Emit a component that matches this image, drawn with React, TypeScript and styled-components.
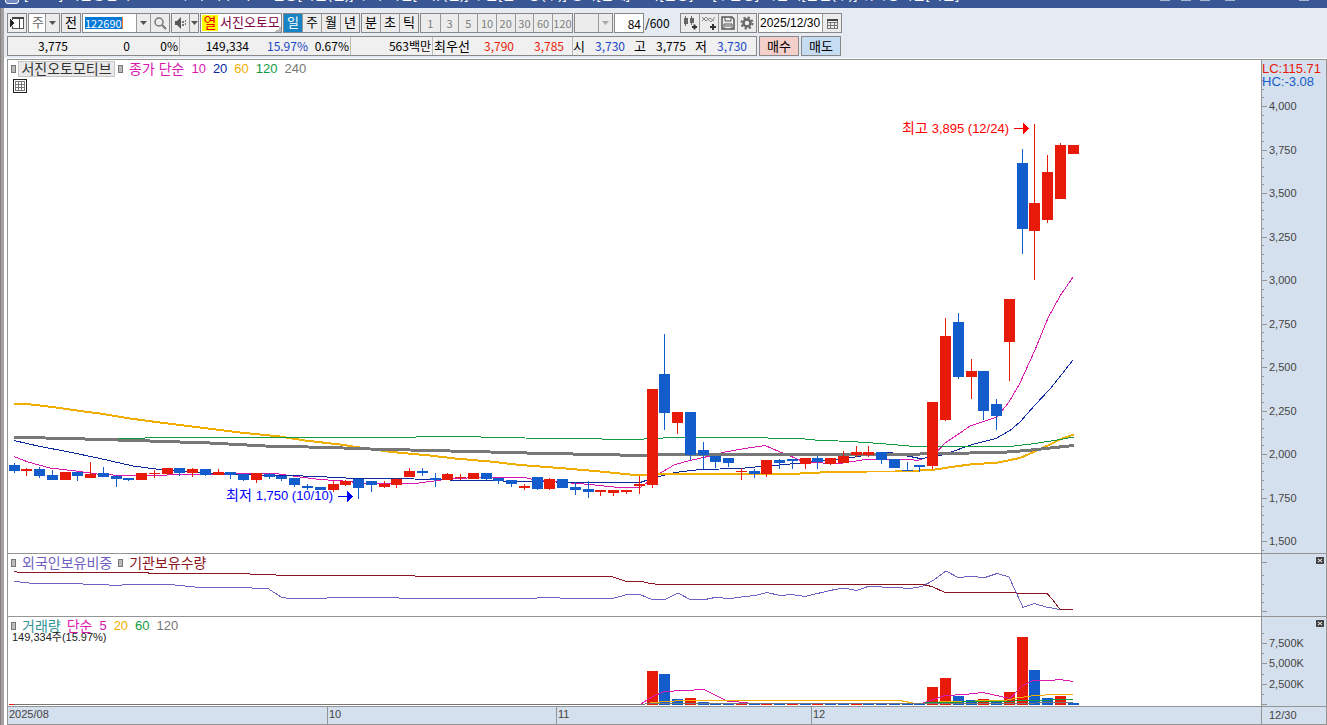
import React from 'react';
import styled, { createGlobalStyle } from 'styled-components';

const RED = '#e81a0a';
const BLUE = '#125ccb';
const NAVY = '#0b2a9e';
const MAGENTA = '#d918ae';
const GOLD = '#f0ae00';
const GREEN = '#119a3f';
const GRAY = '#777777';
const LINE = '#949494';
const AXIS_BG = '#d5e0ee';

const SANS = '"Liberation Sans", "Noto Sans CJK KR", sans-serif';
const NUMERIC = '"Noto Sans CJK KR", sans-serif';

const GlobalStyle = createGlobalStyle`
  * { box-sizing: border-box; }
  body { margin: 0; background: #e5eaf3; font-family: ${SANS}; font-size: 13px; color: #000; overflow: hidden; }
  button, input, select { font-family: inherit; font-size: inherit; margin: 0; padding: 0; border-radius: 0; }
  svg { display: block; }
`;

const Page = styled.div`
  display: flex;
  flex-direction: column;
  min-height: 100vh;
`;

const TitleBar = styled.header`
  display: flex;
  align-items: flex-end;
  height: 8px;
  padding: 0 18px 4px 5px;
  gap: 5px;
  overflow: hidden;
  background: #3a5795;
  color: #fff;
  white-space: pre;
`;

const AppIcon = styled.span`
  flex: none;
  width: 14px;
  height: 14px;
  border: 1px solid #fff;
  border-radius: 3px;
  background: #6f8cc4;
`;

const TitleText = styled.h1`
  flex: 1;
  margin: 0 0 2px;
  font-size: 14px;
  font-weight: 400;
  line-height: 16px;
`;

const WindowMark = styled.span<{ $gap: number }>`
  width: 10px;
  height: 5px;
  margin: 0 0 3px ${p => p.$gap}px;
  border-bottom: 1px solid #a9b6d2;
`;

const Body = styled.div`
  display: flex;
  flex: 1;
`;

const FrameEdge = styled.div`
  width: 4px;
  background: #a4a0a0;
  border-left: 1px solid #858181;
`;

const Main = styled.main`
  flex: 1;
  min-width: 0;
  display: flex;
  flex-direction: column;
`;

const Bars = styled.div`
  padding: 5px 0 2px 3px;
`;

const Toolbar = styled.div`
  display: flex;
  gap: 1px;
  height: 20px;
`;

const Group = styled.div<{ $w: number; $bg?: string }>`
  display: flex;
  flex: none;
  width: ${p => p.$w}px;
  height: 20px;
  border: 1px solid #888;
  background: ${p => p.$bg || '#ececec'};
  overflow: hidden;
`;

const MinuteGroup = styled(Group)`
  display: grid;
  grid-template-columns: repeat(7, 1fr) 20px;
`;

const Tool = styled.button<{ $active?: boolean }>`
  flex: 1;
  min-width: 0;
  display: flex;
  align-items: center;
  justify-content: center;
  border: 0;
  border-left: 1px solid #999;
  background: ${p => (p.$active ? '#1583c4' : '#ececec')};
  color: ${p => (p.$active ? '#fff' : '#000')};
  font-size: 13px;
  line-height: 18px;
  &:first-child { border-left: 0; }
`;

const MinuteTool = styled(Tool)`
  color: #808080;
  font-family: ${NUMERIC};
  font-size: 11px;
`;

const ArrowTool = styled(Tool)<{ $w: number }>`
  flex: none;
  width: ${p => p.$w}px;
`;

const Pick = styled.select`
  flex: 1;
  min-width: 0;
  appearance: none;
  border: 0;
  padding-left: 3px;
  background: transparent;
  color: #666;
  font-size: 13px;
  line-height: 18px;
`;

const CodeInput = styled.input`
  width: 53px;
  border: 0;
  padding-left: 2px;
  background: linear-gradient(90deg, #fff 2px, #0078d7 2px, #0078d7 39px, #f08030 39px, #f08030 40px, #fff 40px) 0 3px / 100% 12px no-repeat #fff;
  color: #fff;
  font-family: ${NUMERIC};
  font-size: 11px;
`;

const Rank = styled.button`
  margin: 1px 0 1px 1px;
  width: 16px;
  border: 0;
  background: #ff0;
  color: #e00;
  font-size: 14px;
  line-height: 16px;
`;

const StockName = styled.button`
  flex: 1;
  min-width: 0;
  overflow: hidden;
  border: 0;
  padding-left: 2px;
  background: linear-gradient(135deg, transparent 50%, #bbb 50%) right bottom / 7px 5px no-repeat #fff;
  color: #7a0040;
  font-size: 13px;
  line-height: 16px;
  text-align: left;
  white-space: nowrap;
`;

const CountInput = styled.input`
  flex: 1;
  min-width: 0;
  border: 0;
  padding: 0 2px;
  background: #fff;
  font-family: ${NUMERIC};
  font-size: 12px;
  text-align: right;
`;

const DateInput = styled.input`
  flex: 1;
  min-width: 0;
  border: 0;
  padding: 0 0 0 1px;
  background: #fff;
  font-size: 12px;
`;

const Total = styled.span`
  width: 34px;
  font-family: ${NUMERIC};
  font-size: 12px;
  line-height: 20px;
`;

const QuoteRow = styled.div`
  display: flex;
  gap: 2px;
  margin-top: 3px;
  font-family: ${NUMERIC};
  font-size: 12px;
  line-height: 18px;
`;

const QuoteBox = styled.div`
  display: flex;
  width: 750px;
  height: 20px;
  border: 1px solid #888;
  background: #f0f0f0;
  white-space: nowrap;
`;

const QuoteCell = styled.div<{ $w: number }>`
  display: flex;
  flex: none;
  width: ${p => p.$w}px;
  padding-right: 1px;
  border-right: 1px solid #bbb;
  &:last-child { border-right: 0; }
`;

const Value = styled.span<{ $w: number; $c?: string }>`
  flex: none;
  width: ${p => p.$w}px;
  color: ${p => p.$c || '#000'};
  text-align: right;
`;

const Caption = styled(Value)`
  font-size: 13px;
`;

const OrderButton = styled.button<{ $bg: string }>`
  width: 40px;
  height: 20px;
  border: 1px solid #888;
  background: ${p => p.$bg};
  font-size: 13px;
  line-height: 16px;
`;

const Chart = styled.section`
  padding-left: 3px;
  border-top: 1px solid #fff;
  background: #fff;
`;

const ChartFrame = styled.div`
  border: 1px solid ${LINE};
  border-bottom: 0;
`;

const Panel = styled.div<{ $h: number; $bg?: string }>`
  display: flex;
  height: ${p => p.$h}px;
  border-bottom: 1px solid ${LINE};
  background: ${p => p.$bg || '#fff'};
`;

const Plot = styled.div`
  position: relative;
  flex: 1;
  min-width: 0;
  overflow: hidden;
`;

const Axis = styled.div`
  position: relative;
  flex: none;
  width: 65px;
  border-left: 1px solid ${LINE};
  background: ${AXIS_BG};
`;

const Canvas = styled.svg`
  width: 100%;
  height: 100%;
  overflow: hidden;
`;

const Legend = styled.div`
  position: absolute;
  left: 3px;
  top: 1px;
  display: flex;
  align-items: center;
  height: 16px;
  white-space: nowrap;
`;

const Marker = styled.span`
  width: 5px;
  height: 8px;
  border: 1px solid #777;
  background: #bbb;
`;

const NameTag = styled.button`
  height: 16px;
  width: 97px;
  margin: 0 3px 0 2px;
  border: 1px solid #c4c4c4;
  background: #e9e9e9;
  color: #333;
  font-size: 14px;
  line-height: 14px;
`;

const Label = styled.span<{ $c: string }>`
  margin-left: 6px;
  color: ${p => p.$c};
  font-size: 14px;
  line-height: 16px;
`;

const Period = styled(Label)`
  margin-left: 7px;
  font-size: 13px;
`;

const GridButton = styled.button`
  position: absolute;
  left: 5px;
  top: 19px;
  width: 14px;
  height: 14px;
  border: 1px solid #222;
  background: #fff;
`;

const VolumeNote = styled.div`
  position: absolute;
  left: 4px;
  top: 14px;
  font-size: 11px;
  line-height: 13px;
  color: #222;
`;

const CloseButton = styled.button`
  position: absolute;
  right: 2px;
  top: 3px;
  width: 8px;
  height: 7px;
  border: 0;
  background: #444;
`;

const MonthCell = styled.div<{ $w?: number }>`
  flex: ${p => (p.$w ? 'none' : '1')};
  width: ${p => (p.$w ? p.$w + 'px' : 'auto')};
  padding-left: 1px;
  border-left: 1px solid ${LINE};
  font-size: 11px;
  line-height: 15px;
  color: #444;
  &:first-child { border-left: 0; }
`;

const LastDate = styled.div`
  flex: none;
  width: 65px;
  padding-left: 7px;
  border-left: 1px solid ${LINE};
  font-size: 11px;
  line-height: 17px;
  color: #444;
`;

/* One candle per trading day: colour, body top, body bottom, high, low. */
type Candle = [string, number, number, number, number];
const candles: Candle[] = [
  ['b', 465, 471, 463, 473], ['r', 469, 471, 468, 476], ['b', 469, 476, 467, 478], ['b', 475, 480, 470, 480],
  ['r', 472, 480, 472, 480], ['b', 472, 476, 472, 481], ['r', 474, 478, 462, 478], ['b', 473, 477, 467, 477],
  ['b', 476, 479, 475, 487], ['b', 478, 480, 478, 481], ['r', 473, 480, 473, 480], ['r', 473, 474, 470, 478],
  ['r', 468, 474, 468, 475], ['b', 468, 473, 468, 476], ['r', 469, 473, 468, 477], ['b', 469, 475, 469, 476],
  ['r', 472, 475, 469, 475], ['b', 472, 475, 472, 479], ['b', 474, 480, 474, 481], ['r', 473, 480, 473, 483],
  ['b', 474, 477, 473, 479], ['b', 476, 479, 476, 481], ['b', 478, 485, 478, 487], ['b', 486, 488, 484, 490],
  ['b', 487, 490, 487, 490], ['r', 484, 490, 481, 492], ['r', 481, 485, 480, 486], ['b', 479, 488, 479, 499],
  ['b', 481, 485, 481, 492], ['r', 484, 487, 481, 488], ['r', 479, 485, 478, 488], ['r', 471, 477, 468, 477],
  ['b', 471, 473, 468, 476], ['b', 478, 480, 473, 487], ['r', 474, 480, 473, 480], ['r', 477, 478, 474, 480],
  ['r', 473, 479, 473, 479], ['b', 473, 479, 473, 480], ['b', 478, 481, 478, 484], ['b', 480, 484, 480, 487],
  ['r', 486, 488, 484, 490], ['b', 477, 489, 477, 490], ['r', 479, 489, 478, 490], ['b', 479, 488, 479, 488],
  ['b', 487, 490, 482, 495], ['b', 489, 492, 481, 498], ['r', 490, 492, 490, 496], ['r', 490, 493, 490, 496],
  ['r', 490, 492, 490, 494], ['r', 484, 486, 476, 494], ['r', 389, 485, 389, 488], ['b', 374, 413, 334, 430],
  ['r', 412, 423, 412, 434], ['b', 412, 455, 412, 460], ['b', 450, 455, 442, 469], ['b', 456, 462, 456, 468],
  ['b', 458, 463, 458, 467], ['r', 471, 472, 468, 480], ['b', 471, 474, 469, 478], ['r', 460, 474, 460, 477],
  ['b', 460, 463, 459, 469], ['b', 459, 461, 459, 469], ['r', 458, 464, 458, 469], ['b', 458, 462, 456, 469],
  ['r', 458, 464, 458, 465], ['r', 456, 463, 451, 463], ['r', 452, 455, 446, 457], ['r', 452, 455, 446, 457],
  ['b', 452, 460, 452, 464], ['b', 459, 468, 459, 468], ['b', 470, 471, 462, 471], ['b', 465, 467, 465, 472],
  ['r', 402, 466, 402, 469], ['r', 336, 420, 318, 421], ['b', 322, 377, 313, 379], ['r', 371, 377, 359, 399],
  ['b', 371, 411, 371, 420], ['b', 404, 416, 399, 430], ['r', 299, 342, 299, 381], ['b', 163, 229, 149, 254],
  ['r', 203, 231, 124, 280], ['r', 172, 220, 155, 223], ['r', 145, 199, 143, 199], ['r', 145, 154, 145, 154],
];

/* Tops of the volume bars that rise above the base line. */
const volumeTops: Record<number, number> = {
  50: 671, 51: 674, 52: 699, 53: 698, 54: 702, 72: 687, 73: 678, 74: 696, 75: 700,
  76: 699, 77: 702, 78: 692, 79: 637, 80: 670, 81: 698, 82: 696, 83: 703,
};
/* Days on which the volume rose over the day before. */
const volumeUp = [0, 50, 53, 57, 59, 61, 63, 66, 72, 73, 76, 78, 79, 82];

const centre = (i: number) => 14 + Math.floor(i * 12.76);
const fill = (c: string) => (c === 'r' ? RED : BLUE);

function Trend({ points, color, width = 1 }: { points: string; color: string; width?: number }) {
  return <polyline points={points} fill="none" stroke={color} strokeWidth={width} shapeRendering="crispEdges" />;
}

const ma60 = '14,404 27,404 40,405.500 60,408 80,411 100,413.500 130,418.500 160,422.500 200,427.500 240,432.500 280,436.500 305,440.500 340,444.500 360,447.500 392,452 430,455.500 455,458.500 490,461.500 520,465 560,468 600,471.500 630,474.500 655,474.500 680,473.500 800,473.500 820,472.500 868,471.500 895,471.500 920,470.500 935,469.500 955,466.500 970,464.500 998,462.500 1020,458 1036,451 1050,444.500 1062,438.500 1074,434.500';
const ma240 = '14,437.500 45,438 85,439 150,441 210,443 265,446 330,447.500 370,449 430,450.500 490,452 545,453.500 600,454.500 640,455.500 660,454.500 900,454.500 940,453.500 1000,452.500 1027,450.500 1050,448 1074,445.500';
const ma120 = '14,438.500 120,438.500 170,437.500 415,437.500 417,436.500 480,436.500 482,437.500 568,438.500 635,439.500 672,437.500 735,437.500 800,438.500 815,440 850,441.500 880,443.500 915,446.500 1010,446.500 1035,443.500 1060,439.500 1074,437';
const ma20 = '14,440.500 40,446.500 67,451.500 100,458.500 133,466 160,469.500 187,471.500 213,473.500 240,474.500 267,475.500 293,475.500 313,476.500 340,477.500 352,478.500 414,479 450,480 480,480 515,481.500 595,482.500 640,482.500 655,477.500 675,472.500 700,469.500 740,468.500 760,466.500 785,464.500 815,461.500 840,459.500 855,457 870,454.500 890,452.500 905,455.500 920,458.500 935,457 950,452.500 972,444.500 996,438.500 1010,430.500 1020,422 1035,405 1050,389 1062,374 1073,360';
const ma10 = '14,456.500 28,462 50,468 80,471.500 100,474.500 125,475.500 155,475.500 180,474.500 215,474.500 240,473.500 275,473.500 300,477 320,479.500 335,480.500 350,481.500 360,483.500 415,483.500 430,481.500 445,479.500 475,477.500 525,477.500 535,480 565,482.500 590,484.500 608,486.500 620,487.500 640,487.500 648,482 662,472 675,464.500 690,460.500 710,456 725,452 745,448.500 765,445.500 780,452 795,458 805,462.500 840,463.500 865,459.500 910,459.500 918,460.500 925,458 935,454 945,443 960,433 970,426 985,421 997,417 1009,402 1020,383 1035,350 1048,318 1060,296 1073,277';
const foreignShare = '14,581.500 20,582 33,583.500 70,583.500 96,584.500 121,585.500 123,584.500 170,584.500 200,587.500 235,587.500 268,588.500 281,597 288,598.500 326,598.500 328,597.500 398,597.500 400,598.500 530,598.500 545,597.500 575,598.500 612,598.500 620,596.500 627,594.500 640,594.500 652,599.500 665,599.500 678,593 690,599.500 705,599.500 715,597.500 730,598.500 745,596.500 755,595.500 767,592.500 780,595.500 792,594.500 805,596.500 830,590.500 843,588 857,590.500 868,586.500 895,587.500 910,588.500 922,586.500 934,580 946,571 958,577.500 970,576.500 985,577.500 997,573.500 1009,577 1016,592 1023,607.500 1034,603.500 1046,607 1060,609.500';
const institutionHoldings = '14,571.500 20,572.500 148,572.500 149,573.500 249,573.500 251,574.500 275,574.500 277,575.500 414,575.500 416,576.500 612,576.500 620,579.500 627,581.500 642,581.500 650,583.500 660,584.500 922,584.500 932,586.500 945,592.500 1015,592.500 1017,593.500 1047,593.500 1053,600 1060,609.500 1073,609.500';
const vol5 = '640,704.500 652,697 664,691.500 685,690.500 704,689.500 727,701 745,702.500 750,703.500 922,703.500 935,699 945,695.500 965,694.500 983,692.500 1010,698.500 1022,686 1033,680.500 1050,680.500 1060,679.500 1073,681.500';
const vol20 = '645,703.500 665,701.500 685,700.500 900,700.500 915,703.500 922,703.500 945,701.500 1005,700.500 1020,697.500 1035,695.500 1055,694.500 1073,694.500';

function ArrowMark({ x, y, color }: { x: number; y: number; color: string }) {
  return (
    <g fill={color} shapeRendering="crispEdges">
      <rect x={x} y={y} width={10} height={1} />
      <path d={`M${x + 9} ${y - 5}l6 5v1l-6 5z`} />
    </g>
  );
}

function PriceCanvas() {
  return (
    <Canvas role="img" aria-label="일봉 차트">
      <g transform="translate(-8 -60)">
        <Trend points={ma10} color={MAGENTA} />
        <Trend points={ma20} color={NAVY} />
        <Trend points={ma60} color={GOLD} width={2} />
        <Trend points={ma120} color={GREEN} />
        <Trend points={ma240} color={GRAY} width={3} />
        <g shapeRendering="crispEdges">
          {candles.map(([c, top, bottom, high, low], i) => (
            <g key={i} fill={fill(c)}>
              <rect x={centre(i) - 5} y={top} width={11} height={bottom - top} />
              <rect x={centre(i)} y={high} width={1} height={low - high} />
            </g>
          ))}
        </g>
        <text x={1009} y={133} fill="#f00" fontSize={13} textAnchor="end"><tspan fontSize={14}>최고 </tspan>3,895 (12/24)</text>
        <ArrowMark x={1014} y={128} color="#f00" />
        <text x={333} y={500} fill="#00f" fontSize={13} textAnchor="end"><tspan fontSize={14}>최저 </tspan>1,750 (10/10)</text>
        <ArrowMark x={338} y={496} color="#00f" />
      </g>
    </Canvas>
  );
}

function PriceAxis() {
  const y = (p: number) => Math.round(106 + (4000 - p) * 0.174);
  const minors = Array.from({ length: 55 }, (_, k) => 1450 + k * 50);
  const majors = Array.from({ length: 11 }, (_, k) => 1500 + k * 250);
  return (
    <Canvas>
      <g transform="translate(-1262 -60)">
        {minors.map(p => <rect key={p} x={1262} y={y(p)} width={2} height={1} fill={LINE} />)}
        {majors.map(p => (
          <g key={p}>
            <rect x={1262} y={y(p)} width={5} height={1} fill={LINE} />
            <text x={1269} y={y(p) + 4} fontSize={11} fill="#444">{p.toLocaleString('en-US')}</text>
          </g>
        ))}
        <text x={1262} y={73} fontSize={13} fill={RED}>LC:115.71</text>
        <text x={1262} y={86} fontSize={13} fill={BLUE}>HC:-3.08</text>
      </g>
    </Canvas>
  );
}

function VolumeCanvas() {
  return (
    <Canvas role="img" aria-label="거래량">
      <g transform="translate(-8 -617)" shapeRendering="crispEdges">
        {candles.map((_, i) => {
          const top = volumeTops[i] || 704;
          return <rect key={i} x={centre(i) - 5} y={top} width={11} height={705 - top} fill={volumeUp.includes(i) ? RED : BLUE} />;
        })}
        <Trend points={vol5} color={MAGENTA} />
        <Trend points={vol20} color={GOLD} />
        <Trend points="925,702.500 1000,701.500 1030,700.500 1073,699.500" color={GREEN} />
        <Trend points="14,704.500 640,704.500 650,703.500 1000,703.500 1073,702.500" color={GRAY} />
      </g>
    </Canvas>
  );
}

function TickMarks({ top, major, minor }: { top: number; major: number[]; minor: number[] }) {
  return (
    <g fill={LINE} transform={`translate(0 ${-top})`}>
      {major.map(y => <rect key={y} y={y} width={5} height={1} />)}
      {minor.map(y => <rect key={y} y={y} width={2} height={1} />)}
    </g>
  );
}

const Caret = ({ color = '#555' }: { color?: string }) => (
  <svg width="7" height="4" aria-hidden="true"><path d="M0 0h7L3.500 4z" fill={color} /></svg>
);

function Close({ label }: { label: string }) {
  return (
    <CloseButton aria-label={label}>
      <svg width="8" height="7"><path d="M2 2l4 3M6 2L2 5" stroke="#fff" /></svg>
    </CloseButton>
  );
}

export default function App() {
  return (
    <Page>
      <GlobalStyle />
      <TitleBar>
        <AppIcon />
        <TitleText>{'[0600] 키움종합차트         주가 지수 차트  신용[비율(일)] 주가 외인[보유(일)] 주문[잔고량(주)] 종목[현재] 호가[잔량]     [주문장] 시간외[단일(주)] 위탁증거금[비율]'}</TitleText>
        <WindowMark $gap={0} /><WindowMark $gap={6} /><WindowMark $gap={4} /><WindowMark $gap={10} /><WindowMark $gap={59} />
      </TitleBar>
      <Body>
        <FrameEdge />
        <Main>
          <Bars>
            <Toolbar>
              <Group $w={20}>
                <Tool aria-label="패널 열기">
                  <svg width="14" height="14" shapeRendering="crispEdges">
                    <path d="M2.500 4V1.500h11v11h-11V10" fill="#fff" stroke="#555" />
                    <path d="M2 1h12v2H2zM9 3h1v10H9z" fill="#444" /><path d="M0 3l5 4-5 4z" fill="#222" />
                  </svg>
                </Tool>
              </Group>
              <Group $w={32} $bg="#fff">
                <Pick aria-label="종목 구분"><option>주</option></Pick>
                <ArrowTool $w={14} aria-label="구분 목록"><Caret /></ArrowTool>
              </Group>
              <Group $w={20}><Tool>전</Tool></Group>
              <Group $w={88} $bg="#fff">
                <CodeInput aria-label="종목코드" defaultValue="122690" />
                <ArrowTool $w={14} aria-label="최근 종목"><Caret /></ArrowTool>
                <Tool aria-label="종목 검색">
                  <svg width="13" height="13"><circle cx="5" cy="5" r="4" fill="none" stroke="#777" strokeWidth="1.500" /><path d="M8 8l4 4" stroke="#777" strokeWidth="2" /></svg>
                </Tool>
              </Group>
              <Group $w={28}>
                <Tool aria-label="소리">
                  <svg width="14" height="12"><path d="M1 4h2l4-4v12L3 8H1z" fill="#555" /><path d="M8 4h2v2H8zM8 7h2v2H8zM11 3h1v2h-1zM11 6h1v2h-1z" fill="#777" /></svg>
                </Tool>
                <ArrowTool $w={9} aria-label="소리 설정"><Caret /></ArrowTool>
              </Group>
              <Group $w={82} $bg="#fff">
                <Rank>열</Rank>
                <StockName>서진오토모</StockName>
              </Group>
              <Group $w={77}><Tool $active>일</Tool><Tool>주</Tool><Tool>월</Tool><Tool>년</Tool></Group>
              <Group $w={58}><Tool>분</Tool><Tool>초</Tool><Tool>틱</Tool></Group>
              <MinuteGroup $w={153}>
                {['1', '3', '5', '10', '20', '30', '60', '120'].map(n => <MinuteTool key={n}>{n}</MinuteTool>)}
              </MinuteGroup>
              <Group $w={39}>
                <Pick aria-label="주기" disabled><option> </option></Pick>
                <ArrowTool $w={14} aria-label="주기 목록" disabled><Caret color="#aaa" /></ArrowTool>
              </Group>
              <Group $w={30} $bg="#fff"><CountInput aria-label="표시 봉 수" defaultValue="84" /></Group>
              <Total>/600</Total>
              <Group $w={77}>
                <Tool aria-label="봉 종류">
                  <svg width="16" height="16"><path d="M2 3h4v6H2zM8 3h4v5H8z" fill="#666" /><path d="M3.500 1v10M9.500 1v9" stroke="#666" /><path d="M10 12h5M12.500 9.500v5" stroke="#333" strokeWidth="2" /></svg>
                </Tool>
                <Tool aria-label="지표 추가">
                  <svg width="16" height="16"><path d="M1 6l4-4 5 5 4-5M1 2l4 4 4-3 4 3" fill="none" stroke="#888" /><path d="M9 12h6M12 9v6" stroke="#333" strokeWidth="2" /></svg>
                </Tool>
                <Tool aria-label="저장">
                  <svg width="14" height="14"><path d="M1 1h10l2 2v10H1z" fill="none" stroke="#555" strokeWidth="1.500" /><path d="M4 1v4h6V1M3 13V8h8v5M4 10h6" fill="none" stroke="#555" /></svg>
                </Tool>
                <Tool aria-label="설정">
                  <svg width="14" height="14"><circle cx="7" cy="7" r="3.500" fill="none" stroke="#666" strokeWidth="2.500" /><circle cx="7" cy="7" r="5.500" fill="none" stroke="#666" strokeWidth="2" strokeDasharray="2.200 2.120" /></svg>
                </Tool>
              </Group>
              <Group $w={84} $bg="#fff">
                <DateInput aria-label="기준일" defaultValue="2025/12/30" />
                <ArrowTool $w={19} aria-label="달력">
                  <svg width="11" height="11" shapeRendering="crispEdges"><path d="M.5 1.500h10v9H.5zM.5 4.500h10M.5 7.500h10M3.500 4v6M7.500 4v6" fill="none" stroke="#777" /><path d="M0 1h11v2H0z" fill="#444" /></svg>
                </ArrowTool>
              </Group>
            </Toolbar>
            <QuoteRow>
              <QuoteBox>
                <QuoteCell $w={172}><Value $w={60}>3,775</Value><Value $w={62}>0</Value><Value $w={48}>0%</Value></QuoteCell>
                <QuoteCell $w={171}><Value $w={69}>149,334</Value><Value $w={59} $c="#1a46c8">15.97%</Value><Value $w={41}>0.67%</Value></QuoteCell>
                <QuoteCell $w={82}><Value $w={80}>563백만</Value></QuoteCell>
                <QuoteCell $w={140}><Caption $w={37}>최우선</Caption><Value $w={44} $c={RED}>3,790</Value><Value $w={50} $c={RED}>3,785</Value></QuoteCell>
                <QuoteCell $w={182}>
                  <Caption $w={12}>시</Caption><Value $w={40} $c="#1a46c8">3,730</Value>
                  <Caption $w={21}>고</Caption><Value $w={40}>3,775</Value>
                  <Caption $w={21}>저</Caption><Value $w={40} $c="#1a46c8">3,730</Value>
                </QuoteCell>
              </QuoteBox>
              <OrderButton $bg="#f5cfca">매수</OrderButton>
              <OrderButton $bg="#c5dcf3">매도</OrderButton>
            </QuoteRow>
          </Bars>
          <Chart>
            <ChartFrame>
              <Panel $h={494}>
                <Plot>
                  <PriceCanvas />
                  <Legend>
                    <Marker /><NameTag>서진오토모티브</NameTag><Marker />
                    <Label $c={MAGENTA}>종가 단순</Label>
                    <Period $c={MAGENTA}>10</Period>
                    <Period $c={NAVY}>20</Period>
                    <Period $c={GOLD}>60</Period>
                    <Period $c={GREEN}>120</Period>
                    <Period $c={GRAY}>240</Period>
                  </Legend>
                  <GridButton aria-label="데이터 표">
                    <svg width="12" height="12" shapeRendering="crispEdges"><path d="M1.500 1.500h9v9h-9zM1.500 4.500h9M1.500 7.500h9M4.500 1v9M7.500 1v9" fill="none" stroke="#777" /></svg>
                  </GridButton>
                </Plot>
                <Axis><PriceAxis /></Axis>
              </Panel>
              <Panel $h={63}>
                <Plot>
                  <Canvas role="img" aria-label="보유 추이">
                    <g transform="translate(-8 -554)">
                      <Trend points={institutionHoldings} color="#8a1420" />
                      <Trend points={foreignShare} color="#7060c0" />
                    </g>
                  </Canvas>
                  <Legend>
                    <Marker /><Label $c="#7060c0">외국인보유비중</Label>
                    <Label $c="#8a1420"> </Label><Marker /><Label $c="#8a1420">기관보유수량</Label>
                  </Legend>
                </Plot>
                <Axis>
                  <Canvas><TickMarks top={554} major={[562, 611]} minor={[575, 584, 593, 602]} /></Canvas>
                  <Close label="보유 지표 닫기" />
                </Axis>
              </Panel>
              <Panel $h={90}>
                <Plot>
                  <VolumeCanvas />
                  <Legend>
                    <Marker /><Label $c="#2f9494">거래량</Label>
                    <Label $c={MAGENTA}>단순</Label>
                    <Period $c={MAGENTA}>5</Period>
                    <Period $c={GOLD}>20</Period>
                    <Period $c={GREEN}>60</Period>
                    <Period $c={GRAY}>120</Period>
                  </Legend>
                  <VolumeNote>149,334주(15.97%)</VolumeNote>
                </Plot>
                <Axis>
                  <Canvas>
                    <TickMarks top={617} major={[643, 663, 684, 704]} minor={[633, 653, 674, 694]} />
                    <g fontSize={11} fill="#444">
                      <text x={7} y={30}>7,500K</text>
                      <text x={7} y={50}>5,000K</text>
                      <text x={7} y={71}>2,500K</text>
                    </g>
                  </Canvas>
                  <Close label="거래량 닫기" />
                </Axis>
              </Panel>
              <Panel $h={18} $bg={AXIS_BG}>
                <MonthCell $w={319}>2025/08</MonthCell>
                <MonthCell $w={229}>10</MonthCell>
                <MonthCell $w={255}>11</MonthCell>
                <MonthCell>12</MonthCell>
                <LastDate>12/30</LastDate>
              </Panel>
            </ChartFrame>
          </Chart>
        </Main>
      </Body>
    </Page>
  );
}
